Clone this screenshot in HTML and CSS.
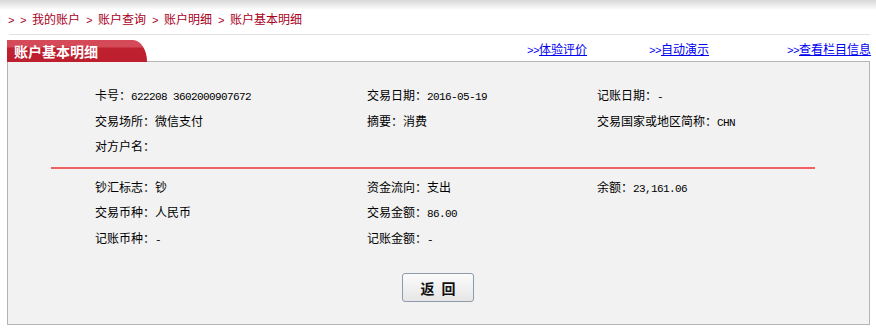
FILE: index.html
```html
<!DOCTYPE html>
<html lang="zh-CN">
<head>
    <meta charset="UTF-8">
    <title>账户基本明细</title>
    <link rel="stylesheet" href="styles.css">
</head>
<body>
    <div class="topbar"></div>
    <div class="crumbs"><span class="sep">&gt; &gt; </span>我的账户<span class="sep"> &gt; </span>账户查询<span class="sep"> &gt; </span>账户明细<span class="sep"> &gt; </span>账户基本明细</div>
    <div class="rule"></div>

    <div class="head">
        <div class="tab">账户基本明细</div>
        <div class="links">
            <span class="link l1"><span class="sep">&gt;&gt;</span><a href="#">体验评价</a></span>
            <span class="link l2"><span class="sep">&gt;&gt;</span><a href="#">自动演示</a></span>
            <span class="link l3"><span class="sep">&gt;&gt;</span><a href="#">查看栏目信息</a></span>
        </div>
    </div>

    <div class="panel">
        <div class="fields">
            <div>卡号：<span class="num">622208 3602000907672</span></div>
            <div>交易日期：<span class="num">2016-05-19</span></div>
            <div>记账日期：<span class="num">-</span></div>
            <div>交易场所：微信支付</div>
            <div>摘要：消费</div>
            <div>交易国家或地区简称：<span class="num">CHN</span></div>
            <div>对方户名：</div>
            <div></div>
            <div></div>
        </div>
        <div class="divider"></div>
        <div class="fields second">
            <div>钞汇标志：钞</div>
            <div>资金流向：支出</div>
            <div>余额：<span class="num">23,161.06</span></div>
            <div>交易币种：人民币</div>
            <div>交易金额：<span class="num">86.00</span></div>
            <div></div>
            <div>记账币种：<span class="num">-</span></div>
            <div>记账金额：<span class="num">-</span></div>
            <div></div>
        </div>
        <div class="actions">
            <button class="back">返<span class="gap"></span>回</button>
        </div>
    </div>
</body>
</html>
```

FILE: styles.css
```css
* {
    margin: 0;
    padding: 0;
    box-sizing: border-box;
}

body {
    font-family: "SimSun", "Noto Sans CJK SC", "DejaVu Sans", sans-serif;
    font-size: 12px;
    color: #000;
    background: #fff;
    width: 876px;
}

/* half-width latin glyphs, 6px per char like the bitmap font */
.sep,
.num {
    font-family: "Liberation Mono", "DejaVu Sans Mono", monospace;
    font-size: 11px;
    letter-spacing: -0.6px;
    white-space: pre;
}

.topbar {
    height: 10px;
    background: linear-gradient(#d8d8d8, #f6f6f6 80%, #fff);
}

.crumbs {
    height: 18px;
    line-height: 18px;
    padding-left: 8px;
    color: #a8001c;
}

.rule {
    margin: 6px 6px 0 9px;
    border-top: 1px solid #e2e2e2;
}

.head {
    display: flex;
    align-items: flex-end;
    margin-top: 5px;
    height: 22px;
}

.tab {
    width: 140px;
    height: 22px;
    margin-left: 7px;
    padding-left: 7px;
    line-height: 23px;
    color: #fff;
    font-size: 14px;
    font-weight: bold;
    background: linear-gradient(#d44a58 0, #d44a58 7px, #c0202f 8px, #bd1f2e);
    border-top-right-radius: 14px 22px;
}

.links {
    flex: 1;
    position: relative;
    height: 22px;
    border-bottom: 1px solid #b4b4b4;
    margin-right: 6px;
}

.link {
    position: absolute;
    top: 1px;
    color: #0000ee;
    line-height: 16px;
    white-space: nowrap;
}

.link a {
    color: #0000ee;
    text-decoration: underline;
}

.l1 { left: 380px; }
.l2 { left: 502px; }
.l3 { left: 640px; }

.panel {
    margin: 0 6px 0 7px;
    height: 263px;
    background: #f2f2f2;
    border: 1px solid #b4b4b4;
    border-top: none;
    padding-top: 20px;
}

.fields {
    display: grid;
    grid-template-columns: 272px 230px 1fr;
    grid-auto-rows: 25.5px;
    padding-left: 87px;
    line-height: 25px;
}

.divider {
    margin: 8px 54px 0 43px;
    height: 2px;
    background: #f06262;
}

.fields.second {
    margin-top: 5px;
}

.actions {
    display: flex;
    justify-content: center;
    margin-top: 23px;
    padding-right: 1px;
}

.back {
    display: flex;
    align-items: center;
    justify-content: center;
    width: 72px;
    height: 29px;
    font-family: inherit;
    font-size: 14px;
    font-weight: bold;
    color: #111;
    background: linear-gradient(#fbfbfb, #e6e6e6);
    border: 1px solid #8d9cab;
    border-radius: 3px;
    cursor: pointer;
}

.gap {
    width: 7px;
}
```
